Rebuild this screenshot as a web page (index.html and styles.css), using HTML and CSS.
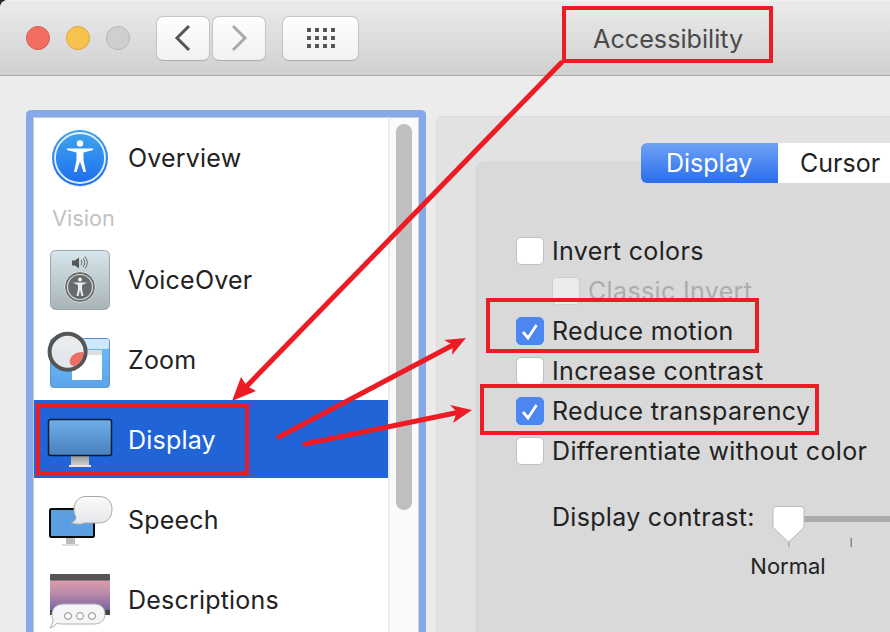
FILE: index.html
```html
<!DOCTYPE html>
<html lang="en">
<head>
<meta charset="utf-8">
<title>Accessibility</title>
<link rel="stylesheet" href="styles.css">
</head>
<body>
<div class="window">
  <header class="titlebar">
    <div class="lights">
      <span class="light red"></span>
      <span class="light yellow"></span>
      <span class="light gray"></span>
    </div>
    <div class="nav">
      <button class="tool back"><svg width="20" height="28" viewBox="0 0 20 28"><path d="M16 2 L4 14 L16 26" fill="none" stroke="#555" stroke-width="3"/></svg></button>
      <button class="tool back"><svg width="20" height="28" viewBox="0 0 20 28"><path d="M4 2 L16 14 L4 26" fill="none" stroke="#aaa" stroke-width="3"/></svg></button>
    </div>
    <button class="tool grid">
      <svg width="28" height="20" viewBox="0 0 28 20" fill="#555">
        <rect x="0" y="0" width="4" height="4"/><rect x="8" y="0" width="4" height="4"/><rect x="16" y="0" width="4" height="4"/><rect x="24" y="0" width="4" height="4"/>
        <rect x="0" y="8" width="4" height="4"/><rect x="8" y="8" width="4" height="4"/><rect x="16" y="8" width="4" height="4"/><rect x="24" y="8" width="4" height="4"/>
        <rect x="0" y="16" width="4" height="4"/><rect x="8" y="16" width="4" height="4"/><rect x="16" y="16" width="4" height="4"/><rect x="24" y="16" width="4" height="4"/>
      </svg>
    </button>
    <h1 class="title">Accessibility</h1>
  </header>

  <main class="content">
    <nav class="sidebar">
      <div class="list">
        <div class="row">
          <svg class="icon" width="60" height="60" viewBox="0 0 60 60">
            <defs>
              <linearGradient id="ov" x1="0" y1="0" x2="0" y2="1"><stop offset="0" stop-color="#3fa3ee"/><stop offset="1" stop-color="#1e6ff0"/></linearGradient>
            </defs>
            <circle cx="30" cy="31" r="28" fill="#bbb" opacity=".5"/>
            <circle cx="30" cy="30" r="28" fill="url(#ov)"/>
            <circle cx="30" cy="30" r="25" fill="url(#ov)" stroke="#e8f2fd" stroke-width="1.8"/>
            <circle cx="30" cy="15.500" r="3.200" fill="#fff"/>
            <path d="M17 20.500 L43 20.500 L43 22 L33.500 24.500 L33.500 32 L36 44 L33.500 44 L30 33.500 L26.500 44 L24 44 L26.500 32 L26.500 24.500 L17 22 Z" fill="#fff"/>
          </svg>
          <span class="label">Overview</span>
        </div>
        <div class="section">Vision</div>
        <div class="row">
          <svg class="icon" width="60" height="60" viewBox="0 0 60 60">
            <defs>
              <linearGradient id="vo" x1="0" y1="0" x2="0" y2="1"><stop offset="0" stop-color="#d6e6ed"/><stop offset="1" stop-color="#a8b3b6"/></linearGradient>
            </defs>
            <rect x=".5" y=".5" width="59" height="59" rx="5" fill="url(#vo)" stroke="#9aa5a8"/>
            <path d="M22 10.500h3l4-3v11l-4-3h-3z" fill="#555"/>
            <path d="M31 10a4 4 0 0 1 0 5M33 8a7 7 0 0 1 0 9M35 6.500a10 10 0 0 1 0 12" fill="none" stroke="#666" stroke-width="1"/>
            <circle cx="30" cy="37" r="15.500" fill="#6b6f70" stroke="#dfe5e6" stroke-width="1"/>
            <circle cx="30" cy="37" r="12.500" fill="#676b6c" stroke="#d5dcdd" stroke-width="1.200"/>
            <circle cx="30" cy="29.500" r="1.900" fill="#e9eeef"/>
            <path d="M22.500 32.500 L37.500 32.500 L32 35 L32 39 L33.500 46 L31.500 46 L30 40 L28.500 46 L26.500 46 L28 39 L28 35 Z" fill="#e9eeef"/>
          </svg>
          <span class="label">VoiceOver</span>
        </div>
        <div class="row">
          <svg class="icon" width="60" height="60" viewBox="0 0 60 60">
            <defs>
              <linearGradient id="zo" x1="0" y1="0" x2="0" y2="1"><stop offset="0" stop-color="#72bbf7"/><stop offset="1" stop-color="#5ba4e8"/></linearGradient>
            </defs>
            <rect x=".5" y="8.500" width="59" height="49" rx="3" fill="url(#zo)" stroke="#5b94c8"/>
            <rect x="1" y="9" width="58" height="10" rx="2" fill="#cfe7fb"/>
            <rect x="22" y="20" width="30" height="30" rx="1" fill="#fff"/>
            <rect x="22" y="20" width="30" height="5" fill="#dedede"/>
            <circle cx="17.600" cy="21.700" r="18" fill="#ececec" fill-opacity=".92" stroke="#555" stroke-width="4"/>
            <path d="M20 30c1-5 6-8 13-8 2 6-5 14-9 14-3 0-5-3-4-6z" fill="#ee6f66"/>
          </svg>
          <span class="label">Zoom</span>
        </div>
        <div class="row selected">
          <svg class="icon" width="66" height="60" viewBox="0 0 66 60">
            <defs>
              <linearGradient id="di" x1="0" y1="0" x2="0" y2="1"><stop offset="0" stop-color="#6cafea"/><stop offset="1" stop-color="#4a7fbc"/></linearGradient>
              <linearGradient id="st" x1="0" y1="0" x2="0" y2="1"><stop offset="0" stop-color="#9a9a9a"/><stop offset="1" stop-color="#d4d4d4"/></linearGradient>
            </defs>
            <rect x="24" y="46" width="18" height="10" fill="url(#st)"/>
            <rect x="22" y="55" width="22" height="2" fill="#e6e6e6"/>
            <rect x="1.500" y="9.500" width="63" height="36" rx="2" fill="url(#di)" stroke="#071a33" stroke-width="1.500"/>
          </svg>
          <span class="label">Display</span>
        </div>
        <div class="row">
          <svg class="icon" width="66" height="60" viewBox="0 0 66 60">
            <defs>
              <linearGradient id="sp" x1="0" y1="0" x2="0" y2="1"><stop offset="0" stop-color="#fbfbfb"/><stop offset="1" stop-color="#e4e6e9"/></linearGradient>
            </defs>
            <rect x="19" y="47" width="9" height="7" fill="#bdbdbd"/>
            <rect x="15" y="54" width="17" height="2" fill="#ddd"/>
            <rect x="3" y="19" width="44" height="28" rx="1.500" fill="#5b9fe2" stroke="#0a0a0a" stroke-width="2"/>
            <path d="M39 6.500h13c7 0 13 4 13 13s-6 13.500-13 13.500H37c-3 2-9 1-13 0 3-1 5-3 5-6-1-2-2-4-2-7 0-9 5-13.500 12-13.500z" fill="url(#sp)" stroke="#a9a9a9"/>
          </svg>
          <span class="label">Speech</span>
        </div>
        <div class="row">
          <svg class="icon" width="66" height="60" viewBox="0 0 66 60">
            <defs>
              <linearGradient id="de" x1="0" y1="0" x2="0" y2="1"><stop offset="0" stop-color="#eaa6b0"/><stop offset=".5" stop-color="#b888a8"/><stop offset="1" stop-color="#5f5a9e"/></linearGradient>
            </defs>
            <rect x="3" y="4" width="60" height="41" rx="2" fill="url(#de)"/>
            <rect x="3" y="4" width="60" height="6.500" rx="1" fill="#555"/>
            <rect x="3" y="40" width="60" height="5" fill="#444"/>
            <path d="M17 34h30c7 0 11 4 11 10s-4 10-11 10H17c-3 0-5 0-7-1-2 3-4 4-7 5 1-2 3-5 3-8-1-2-1-4-1-6 0-6 5-10 12-10z" fill="#f4f5f6" stroke="#b0b0b0"/>
            <circle cx="21" cy="46" r="3.400" fill="#fff" stroke="#8a8a8a"/>
            <circle cx="33" cy="46" r="3.400" fill="#fff" stroke="#8a8a8a"/>
            <circle cx="45" cy="46" r="3.400" fill="#fff" stroke="#8a8a8a"/>
          </svg>
          <span class="label">Descriptions</span>
        </div>
      </div>
      <div class="scroll"><div class="thumb"></div></div>
    </nav>

    <section class="panel">
      <div class="tabs">
        <span class="tab active">Display</span>
        <span class="tab">Cursor</span>
      </div>
      <div class="box">
        <label class="check"><span class="cb"></span>Invert colors</label>
        <label class="check sub"><span class="cb off"></span>Classic Invert</label>
        <label class="check"><span class="cb on"><svg width="18" height="17" viewBox="0 0 18 17"><path d="M2 9 L7 15 L15.500 2" fill="none" stroke="#fff" stroke-width="2.800"/></svg></span>Reduce motion</label>
        <label class="check"><span class="cb"></span>Increase contrast</label>
        <label class="check"><span class="cb on"><svg width="18" height="17" viewBox="0 0 18 17"><path d="M2 9 L7 15 L15.500 2" fill="none" stroke="#fff" stroke-width="2.800"/></svg></span>Reduce transparency</label>
        <label class="check"><span class="cb"></span>Differentiate without color</label>
        <div class="contrast">
          <span class="contrast-label">Display contrast:</span>
          <svg class="slider" width="118" height="46" viewBox="0 0 118 46">
            <rect x="30" y="12" width="88" height="6" fill="#aaa"/>
            <rect x="16" y="34" width="1.500" height="9" fill="#aaa"/>
            <rect x="78.500" y="34" width="1.500" height="9" fill="#888"/>
            <path d="M4 2.500h25a3 3 0 0 1 3 3v16.500c0 1-.4 1.800-1 2.500L16.500 38 2 24.500c-.6-.7-1-1.500-1-2.500V5.500a3 3 0 0 1 3-3z" fill="#fff" stroke="#bbb"/>
          </svg>
        </div>
        <div class="normal">Normal</div>
      </div>
    </section>
  </main>
</div>

<svg class="notes" width="890" height="632" viewBox="0 0 890 632">
  <g fill="none" stroke="#ed1c24" stroke-width="4">
    <rect x="564" y="8" width="207" height="53"/>
    <rect x="488" y="300" width="269" height="51"/>
    <rect x="482" y="386" width="335" height="47"/>
    <rect x="38" y="406" width="209" height="67"/>
  </g>
  <g stroke="#ed1c24" stroke-width="5" stroke-linecap="round">
    <line x1="561" y1="63" x2="243" y2="390"/>
    <line x1="279" y1="437" x2="455" y2="344"/>
    <line x1="305" y1="444" x2="460" y2="412"/>
  </g>
  <g fill="#ed1c24">
    <path d="M232 401 L241 377 L247 386 L256 391 Z"/>
    <path d="M466 338 L444 340 L453 345 L452 355 Z"/>
    <path d="M472 410 L450 405 L457 412 L453 423 Z"/>
  </g>
</svg>
</body>
</html>
```
FILE: styles.css
```css
* { box-sizing: border-box; }
html, body {
  margin: 0;
  width: 890px;
  height: 632px;
  overflow: hidden;
  background: #2a2a2a;
}
body {
  font-family: Inter, "Liberation Sans", sans-serif;
  position: relative;
}
.window {
  width: 890px;
  height: 632px;
  overflow: hidden;
  background: #ececec;
  border-top-left-radius: 8px;
}
.titlebar {
  height: 76px;
  display: flex;
  align-items: center;
  padding: 0 0 0 26px;
  background: linear-gradient(#ebebeb, #d0d0d0);
  border-top: 1px solid #f2f2f2;
  border-bottom: 1px solid #a9a9a9;
}
.lights {
  display: flex;
  gap: 16px;
}
.light {
  width: 24px;
  height: 24px;
  border-radius: 50%;
  border: 1px solid;
}
.red { background: #f26e63; border-color: #dc5a50; }
.yellow { background: #f8c24e; border-color: #dfa63a; }
.gray { background: #cfcfcf; border-color: #b5b5b5; }
.nav {
  display: flex;
  gap: 2px;
  margin-left: 26px;
}
.tool {
  height: 45px;
  padding: 0;
  display: flex;
  align-items: center;
  justify-content: center;
  background: linear-gradient(#fefefe, #f1f1f1);
  border: 1px solid #c4c4c4;
  border-bottom-color: #adadad;
  border-radius: 7px;
}
.back { width: 54px; }
.grid { width: 77px; margin-left: 16px; }
.title {
  margin: 2px 0 0 234px;
  font-size: 25.200px;
  font-weight: 400;
  line-height: 30px;
  color: #4a4a4a;
}
.content {
  height: 556px;
  display: flex;
  align-items: flex-start;
  padding: 34px 0 0 26px;
}
.sidebar {
  flex: none;
  width: 400px;
  height: 540px;
  display: flex;
  border: 7px solid #86a9ea;
  border-radius: 5px;
  border-bottom: 0;
  background: #fff;
}
.list {
  width: 355px;
  flex: none;
  border-left: 1px solid #c9c9c9;
  border-top: 1px solid #c9c9c9;
}
.row {
  height: 80px;
  display: flex;
  align-items: center;
  color: #222;
}
.icon {
  flex: none;
  width: 66px;
  margin: 0 15px 0 13px;
}
.label {
  font-size: 25px;
  line-height: 30px;
  letter-spacing: .2px;
}
.selected {
  height: 78px;
  margin-bottom: 2px;
  padding-top: 2px;
  background: #2064d8;
  color: #fff;
}
.section {
  height: 42px;
  padding-left: 18px;
  font-size: 21.700px;
  line-height: 40px;
  color: #c2c2c2;
}
.scroll {
  flex: 1;
  border-left: 2px solid #ececec;
  border-right: 1px solid #d5d5d5;
  border-top: 1px solid #c9c9c9;
  background: #fafafa;
  padding: 6px 0 0 6px;
}
.thumb {
  width: 16px;
  height: 386px;
  border-radius: 8px;
  background: #bfbfbf;
}
.panel {
  flex: none;
  width: 500px;
  height: 560px;
  margin: 6px 0 0 10px;
  background: #e2e2e2;
  border: 1px solid #dcdcdc;
  border-radius: 6px 0 0 0;
}
.tabs {
  position: relative;
  z-index: 1;
  display: flex;
  height: 40px;
  margin: 26px 0 0 204px;
}
.tab {
  width: 249px;
  background: #fff;
  padding-left: 22px;
  font-size: 25px;
  line-height: 40px;
  color: #222;
}
.active {
  flex: none;
  width: 137px;
  padding-left: 25px;
  background: linear-gradient(#6fa2f3, #2a6ef0);
  border-radius: 6px 0 0 6px;
  color: #fff;
}
.box {
  height: 520px;
  margin: -21px 0 0 39px;
  padding: 68px 0 0 39px;
  background: #d9d9d9;
  border: 1px solid #d2d2d2;
  border-radius: 6px 0 0 0;
}
.check {
  height: 40px;
  display: flex;
  align-items: center;
  gap: 8px;
  font-size: 25px;
  letter-spacing: .35px;
  color: #222;
}
.sub {
  padding-left: 36px;
  color: #adadad;
}
.cb {
  flex: none;
  width: 28px;
  height: 28px;
  display: flex;
  align-items: center;
  justify-content: center;
  background: #fff;
  border: 1px solid #c0c0c0;
  border-radius: 5px;
}
.cb.off {
  background: #ececec;
  border-color: #cfcfcf;
}
.cb.on {
  background: #4c86f0;
  border-color: #4c86f0;
}
.contrast {
  display: flex;
  align-items: flex-start;
  margin-top: 28px;
  padding-left: 36px;
}
.contrast-label {
  width: 220px;
  flex: none;
  font-size: 25px;
  letter-spacing: .3px;
  line-height: 36px;
  color: #222;
}
.slider {
  flex: none;
  display: block;
  margin-top: 5px;
}
.normal {
  width: 100px;
  margin: 3px 0 0 222px;
  text-align: center;
  font-size: 22px;
  line-height: 26px;
  color: #222;
}
.notes {
  position: absolute;
  left: 0;
  top: 0;
  pointer-events: none;
}
```
